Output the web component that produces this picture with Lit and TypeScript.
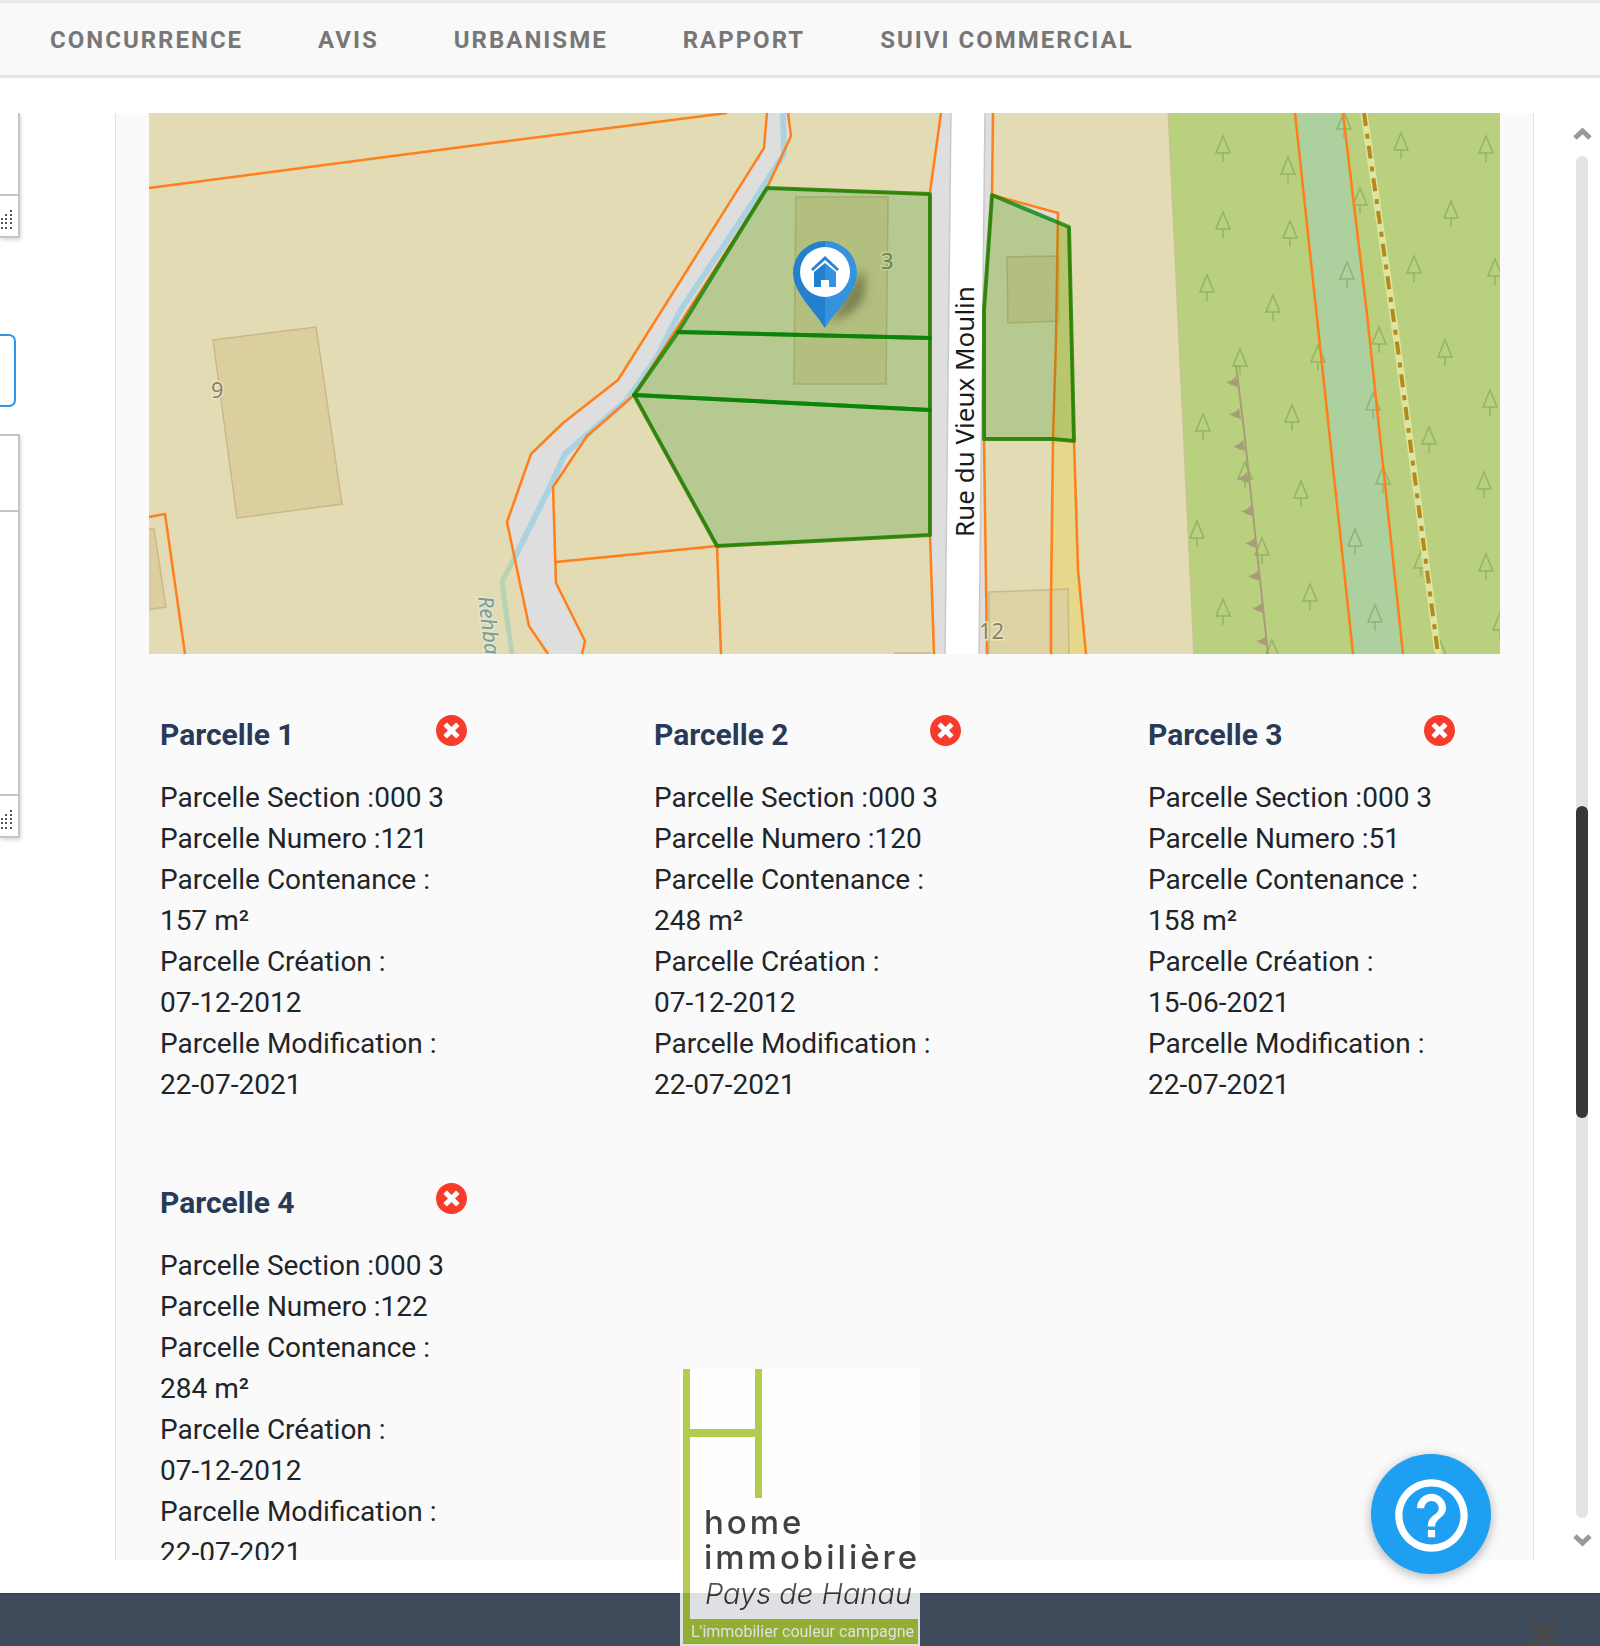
import { LitElement, html, svg, css } from "lit";
import { customElement, property } from "lit/decorators.js";

interface Parcel {
  name: string;
  section: string;
  numero: string;
  contenance: string;
  creation: string;
  modification: string;
}

const NAV = ["Concurrence", "Avis", "Urbanisme", "Rapport", "Suivi commercial"];

const PARCELS: Parcel[] = [
  { name: "Parcelle 1", section: "000 3", numero: "121", contenance: "157 m²", creation: "07-12-2012", modification: "22-07-2021" },
  { name: "Parcelle 2", section: "000 3", numero: "120", contenance: "248 m²", creation: "07-12-2012", modification: "22-07-2021" },
  { name: "Parcelle 3", section: "000 3", numero: "51", contenance: "158 m²", creation: "15-06-2021", modification: "22-07-2021" },
  { name: "Parcelle 4", section: "000 3", numero: "122", contenance: "284 m²", creation: "07-12-2012", modification: "22-07-2021" },
];

// Tops of the tree symbols in the wood, in map units.
const TREES: [number, number][] = [
  [1223, 135], [1288, 156], [1344, 111], [1360, 187], [1401, 132], [1486, 135], [1451, 200],
  [1223, 211], [1290, 220], [1347, 261], [1414, 255], [1495, 258], [1207, 274], [1273, 294],
  [1240, 348], [1318, 344], [1379, 326], [1445, 339], [1490, 389], [1373, 392], [1203, 413],
  [1292, 404], [1429, 426], [1245, 461], [1383, 466], [1301, 480], [1484, 471], [1197, 520],
  [1355, 528], [1262, 537], [1486, 553], [1421, 550], [1310, 583], [1223, 598], [1375, 604],
  [1500, 612], [1272, 639], [1440, 639],
];

// Tips of the embankment teeth.
const TEETH: [number, number][] = [
  [1226, 382], [1229, 414], [1233, 446], [1237, 478], [1241, 511], [1245, 543], [1248, 576], [1252, 608], [1256, 641],
];

@customElement("cadastre-map")
class CadastreMap extends LitElement {
  static styles = css`
    :host { display: block; }
    svg { display: block; width: 100%; height: auto; }
    .cadastre { fill: none; stroke: #ff7f1a; stroke-width: 2.5; stroke-linejoin: round; }
    .building { fill: #dccf9f; stroke: #c9b98a; stroke-width: 1.5; }
    .parcel { fill: #0c8000; fill-opacity: 0.2; stroke: #008000; stroke-opacity: 0.75; stroke-width: 4; stroke-linejoin: round; }
    .tree { fill: none; stroke: #6f9850; stroke-opacity: 0.5; stroke-width: 1.5; }
    .number { font: 22px "Noto Sans", sans-serif; fill: #8a8262; stroke: #ebe4c4; stroke-width: 3; paint-order: stroke; }
    .street { font: 26px "Noto Sans", sans-serif; fill: #1a1a1a; }
    .stream { font: italic 21px "Noto Sans", sans-serif; fill: #719ea0; stroke: #e9e3c4; stroke-width: 3; paint-order: stroke; }
  `;

  render() {
    return html`
      <svg viewBox="149 113 1351 541" role="img" aria-label="Plan cadastral">
        <defs>
          <linearGradient id="pin">
            <stop offset="0.5" stop-color="#2380cc"></stop>
            <stop offset="0.5" stop-color="#3492de"></stop>
          </linearGradient>
          <filter id="soft" x="-50%" y="-50%" width="200%" height="200%"><feGaussianBlur stdDeviation="5"></feGaussianBlur></filter>
        </defs>
        <rect x="149" y="113" width="1351" height="541" fill="#e2dbb4"></rect>

        <path fill="#dedede" d="M767 113L764 148 618 380 563 423 531 454 507 522 529 626 548 654H582L585 641 556 583 553 487 587 436 634 395 767 188 791 136 789 113Z"></path>
        <path fill="none" stroke="#abd3df" stroke-width="6" d="M783 113L784 154 757 196 680 311 657 357 627 400 565 454 550 487 515 557"></path>
        <path fill="none" stroke="#b5d3b5" stroke-width="5" d="M515 557L502 582 512 654"></path>

        <path fill="#dedede" d="M941 113L930 192V535L934 654H987L984 440V310L993 195V113Z"></path>
        <path fill="#dedede" d="M992 195L1058 213V225Z"></path>
        <path fill="#fff" stroke="#c9c9c9" stroke-width="1.5" d="M951 110L945 657H979L985 110Z"></path>

        <path class="building" d="M213 340L316 327 342 504 237 518Z"></path>
        <path class="building" d="M145 529H154L166 607 145 610Z"></path>
        <path class="building" d="M796 197H888L886 384H794Z"></path>
        <path class="building" d="M1007 257L1059 256V321L1008 323Z"></path>
        <path class="building" d="M895 653H930V658H895Z"></path>
        <path fill="#ead560" fill-opacity="0.5" d="M1058 222L1069 227 1074 440 1078 570 1086 654H1051L1053 440Z"></path>
        <path class="building" fill-opacity="0.8" d="M989 592L1068 589 1069 660H989Z"></path>

        <path fill="#b9d17e" stroke="#cbbd94" stroke-width="1" d="M1168 110L1194 657H1503V110Z"></path>
        <path fill="#acd09e" d="M1295 113L1320 346 1353 654H1403L1367 314 1343 113Z"></path>
        ${TREES.map(
          ([x, y]) => svg`<path class="tree" d="M${x} ${y + 1}L${x + 7} ${y + 18}H${x - 7}ZM${x} ${y + 18}V${y + 27}"></path>`
        )}
        <path fill="none" stroke="#a99c79" stroke-width="2" d="M1236 365L1244 430 1268 654"></path>
        ${TEETH.map(
          ([x, y]) => svg`<path fill="#a99c79" d="M${x} ${y}Q${x + 7} ${y - 1} ${x + 10} ${y - 6}L${x + 12} ${y + 5}Q${x + 6} ${y + 4} ${x} ${y}Z"></path>`
        )}
        <path fill="none" stroke="#dde5a0" stroke-width="7" d="M1364 113L1398 350 1438 654"></path>
        <path fill="none" stroke="#b38a1b" stroke-width="4" stroke-dasharray="13 8 5 7" d="M1364 113L1398 350 1438 654"></path>

        <path class="cadastre" d="M149 188L500 142 727 113"></path>
        <path class="cadastre" d="M149 517L165 514 185 654"></path>
        <path class="cadastre" d="M767 113L764 148 618 380 563 423 531 454 507 522 529 626 548 654"></path>
        <path class="cadastre" d="M788 113L791 136 767 188 634 395 587 436 553 487 556 583 585 641 582 654"></path>
        <path class="cadastre" d="M556 562L717 546 721 654M717 546L634 395"></path>
        <path class="cadastre" d="M941 113L930 192M767 188L930 194V535L934 654M717 546L930 535"></path>
        <path class="cadastre" d="M993 113L992 195 1058 213 1056 340 1053 440 1051 600V654"></path>
        <path class="cadastre" d="M992 195L984 310V440L987 654M984 439H1053L1074 441M1069 227L1074 441 1078 570 1086 654"></path>
        <path class="cadastre" d="M1295 113L1320 346 1353 654M1343 113L1367 314 1403 654"></path>

        <text class="number" x="211" y="398">9</text>
        <text class="number" x="881" y="269">3</text>
        <text class="number" x="979" y="639">12</text>
        <text class="stream" transform="translate(478 597) rotate(83)">Rehba</text>
        <text class="street" transform="translate(974 537) rotate(-90)">Rue du Vieux Moulin</text>

        <path class="parcel" d="M767 188L930 194V338L678 332Z"></path>
        <path class="parcel" d="M678 332L930 338V410L634 395Z"></path>
        <path class="parcel" d="M634 395L930 410V535L717 546Z"></path>
        <path class="parcel" d="M992 195L1069 227 1074 441 1053 439H984V310Z"></path>

        <path fill="#4c5028" fill-opacity="0.55" filter="url(#soft)" d="M828 324L862 268Q872 298 852 312Z"></path>
        <path fill="url(#pin)" d="M825 328C815 312 793 292 793 273A32 32 0 0 1 857 273C857 292 835 312 825 328Z"></path>
        <circle cx="825" cy="272" r="25" fill="#fff"></circle>
        <path fill="none" stroke="#2a86d2" stroke-width="3" d="M812 270L825 258 838 270"></path>
        <path fill="url(#pin)" d="M825 263L836 272V287H829V280H821V287H814V272Z"></path>
      </svg>
    `;
  }
}

@customElement("parcel-card")
class ParcelCard extends LitElement {
  static styles = css`
    :host { display: block; }
    .head { display: flex; justify-content: space-between; width: 90%; height: 42px; margin-bottom: 20px; }
    .name { margin: 0; font-size: 30px; line-height: 40px; font-weight: 700; color: #293a58; }
    .remove { width: 31px; height: 31px; padding: 0; border: 0; background: none; cursor: pointer; }
    .remove svg { display: block; width: 31px; height: 31px; }
    .line { margin: 0; font-size: 28px; line-height: 41px; color: #212529; }
    .value { white-space: nowrap; }
  `;

  @property({ attribute: false }) parcel!: Parcel;

  render() {
    const p = this.parcel;
    return html`
      <div class="head">
        <h3 class="name">${p.name}</h3>
        <button class="remove" type="button" aria-label="Supprimer ${p.name}">
          <svg viewBox="8 8 496 496">
            <circle cx="256" cy="256" r="200" fill="#fff"></circle>
            <path fill="#f83b2b" d="M256 8C119 8 8 119 8 256s111 248 248 248 248-111 248-248S393 8 256 8zm121.6 313.1c4.7 4.7 4.7 12.3 0 17L338 377.6c-4.7 4.7-12.3 4.7-17 0L256 312l-65.1 65.6c-4.7 4.7-12.3 4.7-17 0L134.4 338c-4.7-4.7-4.7-12.3 0-17l65.6-65-65.6-65.1c-4.7-4.7-4.7-12.3 0-17l39.6-39.6c4.7-4.7 12.3-4.7 17 0l65 65.7 65.1-65.6c4.7-4.7 12.3-4.7 17 0l39.6 39.6c4.7 4.7 4.7 12.3 0 17L312 256l65.6 65.1z"></path>
          </svg>
        </button>
      </div>
      <p class="line">Parcelle Section :<span class="value">${p.section}</span></p>
      <p class="line">Parcelle Numero :<span class="value">${p.numero}</span></p>
      <p class="line">Parcelle Contenance : <span class="value">${p.contenance}</span></p>
      <p class="line">Parcelle Création : <span class="value">${p.creation}</span></p>
      <p class="line">Parcelle Modification : <span class="value">${p.modification}</span></p>
    `;
  }
}

@customElement("agency-logo")
class AgencyLogo extends LitElement {
  static styles = css`
    :host { display: block; opacity: 0.83; }
    svg { display: block; width: 240px; height: 277px; }
    .bar { fill: #a3c42c; }
    .brand { font: 500 33px Inter, sans-serif; letter-spacing: 3px; fill: #1c1c1c; }
    .place { font: italic 300 29px Inter, sans-serif; fill: #2c2c2c; }
    .motto { font: 400 16px Roboto, sans-serif; fill: #fff; }
  `;

  render() {
    return html`
      <svg viewBox="0 0 240 277" role="img" aria-label="home immobilière">
        <rect width="240" height="277" fill="#fff"></rect>
        <path class="bar" d="M3 0H10V60H75V0H82V129H75V68H10V250H238V275H3Z"></path>
        <text class="brand" x="24" y="165">home</text>
        <text class="brand" x="24" y="200">immobilière</text>
        <text class="place" x="25" y="235">Pays de Hanau</text>
        <text class="motto" x="11" y="268">L'immobilier couleur campagne</text>
      </svg>
    `;
  }
}

@customElement("app-root")
class AppRoot extends LitElement {
  static styles = css`
    :host {
      display: flex;
      flex-direction: column;
      position: relative;
      height: 100vh;
      overflow: hidden;
      background: #fff;
      font-family: Roboto, "Liberation Sans", sans-serif;
    }
    .nav {
      display: flex;
      gap: 75px;
      height: 70px;
      padding: 2px 50px 0;
      align-items: center;
      flex: none;
      background: #f9f9f9;
      border-top: 3px solid #e6e9ee;
      border-bottom: 3px solid #e2e5e9;
    }
    .link { color: #777; font-size: 24px; line-height: 32px; font-weight: 700; letter-spacing: 2px; text-transform: uppercase; text-decoration: none; white-space: nowrap; }
    .main { display: flex; flex: 1; min-height: 0; padding: 35px 0 33px; }
    .side { display: flex; flex-direction: column; flex: none; width: 32px; margin-right: 83px; overflow: hidden; }
    .editor { display: flex; flex-direction: column; flex: none; width: 18px; border: solid #c4c4c4; border-width: 0 2px 2px 0; box-shadow: 1px 2px 4px rgba(0, 0, 0, 0.16); }
    .short { height: 123px; margin-bottom: 96px; }
    .tall { height: 400px; border-top-width: 2px; }
    .tools { height: 74px; border-bottom: 2px solid #c4c4c4; }
    .area { flex: 1; width: 100%; min-height: 0; padding: 0; border: 0; outline: 0; resize: none; background: #fff; }
    .foot { display: flex; align-items: flex-end; height: 34px; padding: 0 0 6px; border-top: 2px solid #c4c4c4; }
    .grip { display: block; flex: none; width: 12px; height: 20px; }
    .field { flex: none; width: 16px; height: 73px; margin: 0 0 27px; padding: 0; box-sizing: border-box; border: 2px solid #2b98f0; border-left: 0; border-radius: 0 7px 7px 0; background: #fff; }
    .panel { flex: 1; min-width: 0; overflow: hidden; padding: 0 33px; background: #fafafa; border: solid #e2e2e2; border-width: 0 1px; }
    .cards { display: grid; grid-template-columns: repeat(3, 1fr); gap: 78px 153px; padding: 61px 11px; }
    .scroll { display: flex; flex-direction: column; align-items: center; flex: none; width: 32px; padding: 14px 2px 13px 32px; }
    .arrow { padding: 0; border: 0; background: none; line-height: 0; }
    .track { display: flex; flex-direction: column; align-items: center; flex: 1; width: 12px; margin: 16px 0; border-radius: 7px; background: #e3e3e3; }
    .before { flex: 650; }
    .thumb { flex: 311; width: 12px; border-radius: 6px; background: #373737; }
    .after { flex: 400; }
    .footer { display: flex; justify-content: flex-end; flex: none; height: 52px; padding: 0 42px; background: #3f4a5a; border-top: 1px solid #24405c; }
    .close { margin-top: 25px; padding: 0; border: 0; background: none; line-height: 0; height: 30px; }
    .logo { position: absolute; left: calc(50% - 120px); bottom: 0; }
    .help { position: absolute; right: 109px; bottom: 72px; display: flex; align-items: center; justify-content: center; width: 120px; height: 120px; padding: 2px 0 0; border: 0; border-radius: 50%; background: #1e9ff2; box-shadow: 0 3px 12px rgba(0, 0, 0, 0.3); }
    .help svg { width: 87px; height: 87px; fill: #fff; }
  `;

  private grip() {
    const dots = [[10, 0], [5, 4], [10, 4], [1, 8], [5, 8], [10, 8], [1, 12], [5, 12], [10, 12], [1, 17], [5, 17], [10, 17]];
    return html`<svg class="grip" viewBox="0 0 12 20">${dots.map(([x, y]) => svg`<rect x=${x} y=${y} width="2" height="2" fill="#555"></rect>`)}</svg>`;
  }

  private arrow(up: boolean) {
    return html`<button class="arrow" type="button" aria-label=${up ? "Monter" : "Descendre"}>
      <svg width="19" height="13" viewBox="0 0 19 13"><path fill="none" stroke="#999" stroke-width="5" d=${up ? "M2 11L9.5 4 17 11" : "M2 2L9.5 9 17 2"}></path></svg>
    </button>`;
  }

  render() {
    return html`
      <nav class="nav">${NAV.map((n) => html`<a class="link" href="#">${n}</a>`)}</nav>
      <main class="main">
        <div class="side">
          <div class="editor short">
            <textarea class="area" aria-label="Description"></textarea>
            <div class="foot">${this.grip()}</div>
          </div>
          <input class="field" type="text" aria-label="Titre" />
          <div class="editor tall">
            <div class="tools"></div>
            <textarea class="area" aria-label="Commentaire"></textarea>
            <div class="foot">${this.grip()}</div>
          </div>
        </div>
        <section class="panel">
          <cadastre-map></cadastre-map>
          <div class="cards">${PARCELS.map((p) => html`<parcel-card .parcel=${p}></parcel-card>`)}</div>
        </section>
        <div class="scroll">
          ${this.arrow(true)}
          <div class="track"><div class="before"></div><div class="thumb"></div><div class="after"></div></div>
          ${this.arrow(false)}
        </div>
      </main>
      <footer class="footer">
        <button class="close" type="button" aria-label="Fermer">
          <svg width="30" height="30" viewBox="0 0 30 30"><path fill="none" stroke="#4a4a4a" stroke-width="7" d="M3 3L27 27M27 3L3 27"></path></svg>
        </button>
      </footer>
      <agency-logo class="logo"></agency-logo>
      <button class="help" type="button" aria-label="Aide">
        <svg viewBox="0 0 24 24"><path d="M11 18h2v-2h-2v2zm1-16C6.48 2 2 6.48 2 12s4.48 10 10 10 10-4.48 10-10S17.52 2 12 2zm0 18c-4.41 0-8-3.59-8-8s3.59-8 8-8 8 3.59 8 8-3.59 8-8 8zm0-14c-2.21 0-4 1.79-4 4h2c0-1.1.9-2 2-2s2 .9 2 2c0 2-3 1.75-3 5h2c0-2.25 3-2.5 3-5 0-2.21-1.79-4-4-4z"></path></svg>
      </button>
    `;
  }
}
